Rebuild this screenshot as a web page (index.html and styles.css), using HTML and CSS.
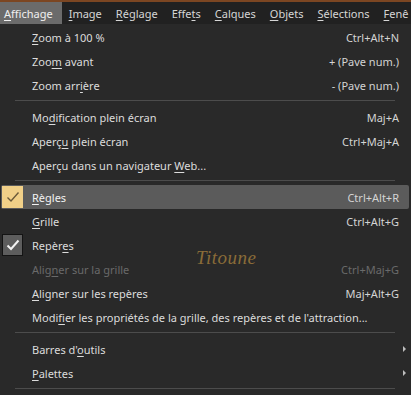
FILE: index.html
```html
<!DOCTYPE html>
<html lang="fr">

<head>
  <meta charset="UTF-8">
  <meta name="viewport" content="width=device-width, initial-scale=1.0">
  <title>Affichage</title>
  <link rel="stylesheet" href="styles.css">
</head>

<body>

  <div class="menubar">
    <span class="top-item active"><u>A</u>ffichage</span>
    <span class="top-item"><u>I</u>mage</span>
    <span class="top-item"><u>R</u>églage</span>
    <span class="top-item">Effe<u>t</u>s</span>
    <span class="top-item"><u>C</u>alques</span>
    <span class="top-item"><u>O</u>bjets</span>
    <span class="top-item"><u>S</u>élections</span>
    <span class="top-item"><u>F</u>enê</span>
  </div>

  <ul class="menu">
    <li class="item"><span class="label"><u>Z</u>oom à 100 %</span><span class="shortcut">Ctrl+Alt+N</span></li>
    <li class="item"><span class="label">Zoo<u>m</u> avant</span><span class="shortcut">+ (Pave num.)</span></li>
    <li class="item"><span class="label">Zoom arr<u>i</u>ère</span><span class="shortcut">- (Pave num.)</span></li>
    <li class="sep"></li>
    <li class="item"><span class="label">Mo<u>d</u>ification plein écran</span><span class="shortcut">Maj+A</span></li>
    <li class="item"><span class="label">Aperç<u>u</u> plein écran</span><span class="shortcut">Ctrl+Maj+A</span></li>
    <li class="item"><span class="label">Aperçu dans un navigateur <u>W</u>eb...</span></li>
    <li class="sep"></li>
    <li class="item hover">
      <span class="check check-hover">
        <svg width="14" height="12" viewBox="0 0 14 12"><path d="M1.5 6.5 L5 10 L12.5 1.5" fill="none" stroke="#6b5a3a" stroke-width="1.4"/></svg>
      </span>
      <span class="label"><u>R</u>ègles</span><span class="shortcut">Ctrl+Alt+R</span>
    </li>
    <li class="item"><span class="label"><u>G</u>rille</span><span class="shortcut">Ctrl+Alt+G</span></li>
    <li class="item">
      <span class="check check-on">
        <svg width="14" height="12" viewBox="0 0 14 12"><path d="M1.5 6.5 L5 10 L12.5 1.5" fill="none" stroke="#f2f2f2" stroke-width="2"/></svg>
      </span>
      <span class="label">Repèr<u>e</u>s</span>
    </li>
    <li class="item disabled"><span class="label">Alig<u>n</u>er sur la grille</span><span class="shortcut">Ctrl+Maj+G</span></li>
    <li class="item"><span class="label"><u>A</u>ligner sur les repères</span><span class="shortcut">Maj+Alt+G</span></li>
    <li class="item"><span class="label">Modi<u>f</u>ier les propriétés de la grille, des repères et de l'attraction...</span></li>
    <li class="sep"></li>
    <li class="item"><span class="label">Barres d'<u>o</u>utils</span><span class="arrow"></span></li>
    <li class="item"><span class="label"><u>P</u>alettes</span><span class="arrow"></span></li>
    <li class="sep"></li>
  </ul>

  <div class="watermark">Titoune</div>

</body>

</html>
```

FILE: styles.css
```css
body {
  margin: 0;
  padding: 0;
  width: 411px;
  height: 395px;
  overflow: hidden;
  background-color: #292929;
  color: #dcdcdc;
  font-family: 'Noto Sans', 'Open Sans', sans-serif;
  font-size: 11px;
  position: relative;
}

u {
  text-decoration: underline;
  text-underline-offset: 2px;
}

/* top menu bar */
.menubar {
  display: flex;
  height: 22px;
  border-top: 2px solid #7c4622;
  background-color: #212121;
  white-space: nowrap;
  overflow: hidden;
}

.top-item {
  display: flex;
  align-items: center;
  padding: 0 7px;
  color: #d6d6d6;
}

.top-item:first-child {
  padding: 0 9px 0 4px;
}

.top-item.active {
  background-color: #6b6b6b;
  color: #f0f0f0;
}

/* dropdown */
.menu {
  list-style: none;
  margin: 0;
  padding: 1px 0 0 0;
}

.item {
  display: flex;
  align-items: center;
  height: 24px;
  padding: 0 12px 0 32px;
  position: relative;
  white-space: nowrap;
}

.label {
  flex: 1;
}

.shortcut {
  color: #d4d4d4;
}

.disabled .label,
.disabled .shortcut {
  color: #6a6a6a;
}

.item.hover {
  background-color: #5b5b5b;
  margin: 0 2px 0 1px;
  padding-left: 31px;
  padding-right: 10px;
  border-radius: 2px;
  color: #f2f2f2;
}

.check {
  position: absolute;
  left: 2px;
  top: 1px;
  width: 21px;
  height: 22px;
  display: flex;
  align-items: center;
  justify-content: center;
  box-sizing: border-box;
}

.check-hover {
  left: 1px;
  background-color: #f1d088;
}

.check-on {
  background-color: #5d5d5d;
  border: 1px solid #141414;
}

.arrow {
  position: absolute;
  right: 5px;
  top: 9px;
  width: 0;
  height: 0;
  border-top: 3px solid transparent;
  border-bottom: 3px solid transparent;
  border-left: 3px solid #bdbdbd;
}

.sep {
  height: 1px;
  margin: 3px 16px 4px 15px;
  background-color: #4c4c4c;
}

.watermark {
  position: absolute;
  left: 196px;
  top: 247px;
  font-family: 'Liberation Serif', serif;
  font-style: italic;
  font-size: 19px;
  color: #8a6c38;
  letter-spacing: 0.5px;
}
```
